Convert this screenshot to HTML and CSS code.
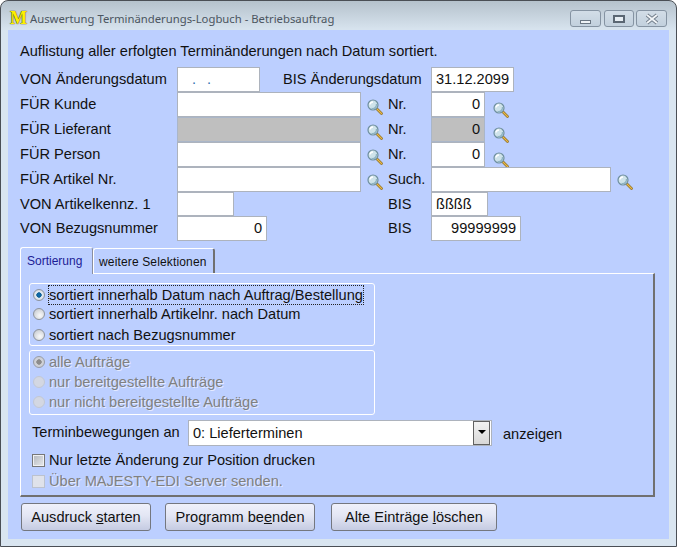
FILE: index.html
```html
<!DOCTYPE html>
<html lang="de">
<head>
    <meta charset="utf-8" />
    <title>Auswertung Terminänderungs-Logbuch - Betriebsauftrag</title>
    <link rel="stylesheet" href="styles.css">
</head>
<body>
    <svg class="defs" width="0" height="0">
        <symbol id="lens" viewBox="0 0 16 16">
            <path d="M9.5 9.5L14.5 14.5" stroke="#8a6a20" stroke-width="2.6" stroke-linecap="round"/>
            <path d="M10 10L14.5 14.5" stroke="#e8b848" stroke-width="1.3" stroke-linecap="round"/>
            <circle cx="6" cy="6" r="5" fill="#cfe3ea" stroke="#6f8f9e" stroke-width="1.2"/>
            <path d="M3 5.5A3 3 0 0 1 6 3" fill="none" stroke="#fff" stroke-width="1.5"/>
            <path d="M4.5 9.5A4 4 0 0 0 9.5 5" fill="none" stroke="#8fb4c4" stroke-width="1.4"/>
        </symbol>
    </svg>

    <div class="window">
        <div class="titlebar">
            <span class="logo">M</span>
            <span class="title">Auswertung Terminänderungs-Logbuch - Betriebsauftrag</span>
            <div class="controls">
                <div class="ctrl"><span class="ico-min"></span></div>
                <div class="ctrl ctrl-mid"><span class="ico-max"></span></div>
                <div class="ctrl">
                    <svg width="16" height="12" viewBox="0 0 16 12"><path d="M3 2L13 10M13 2L3 10" stroke="#6f7b88" stroke-width="3.6"/><path d="M3 2L13 10M13 2L3 10" stroke="#f2f5f8" stroke-width="1.8"/></svg>
                </div>
            </div>
        </div>

        <div class="client">
            <div class="intro">Auflistung aller erfolgten Terminänderungen nach Datum sortiert.</div>

            <div class="row">
                <div class="label">VON Änderungsdatum</div>
                <div class="field w-date blank-date">. .</div>
                <div class="label label-bis">BIS Änderungsdatum</div>
                <div class="field w-date">31.12.2099</div>
            </div>
            <div class="row">
                <div class="label">FÜR Kunde</div>
                <div class="slot"><div class="field w-main"></div><svg class="lens"><use href="#lens"/></svg></div>
                <div class="label2">Nr.</div>
                <div class="field w-nr num">0</div>
                <svg class="lens lens-low"><use href="#lens"/></svg>
            </div>
            <div class="row">
                <div class="label">FÜR Lieferant</div>
                <div class="slot"><div class="field w-main off"></div><svg class="lens"><use href="#lens"/></svg></div>
                <div class="label2">Nr.</div>
                <div class="field w-nr num off">0</div>
                <svg class="lens lens-low"><use href="#lens"/></svg>
            </div>
            <div class="row">
                <div class="label">FÜR Person</div>
                <div class="slot"><div class="field w-main"></div><svg class="lens"><use href="#lens"/></svg></div>
                <div class="label2">Nr.</div>
                <div class="field w-nr num">0</div>
                <svg class="lens lens-low"><use href="#lens"/></svg>
            </div>
            <div class="row">
                <div class="label">FÜR Artikel Nr.</div>
                <div class="slot"><div class="field w-main"></div><svg class="lens"><use href="#lens"/></svg></div>
                <div class="label2">Such.</div>
                <div class="field w-such"></div>
                <svg class="lens"><use href="#lens"/></svg>
            </div>
            <div class="row row-short">
                <div class="label">VON Artikelkennz. 1</div>
                <div class="slot"><div class="field w-kz"></div></div>
                <div class="label2">BIS</div>
                <div class="field w-kz">ßßßß</div>
            </div>
            <div class="row">
                <div class="label">VON Bezugsnummer</div>
                <div class="slot"><div class="field w-bez num">0</div></div>
                <div class="label2">BIS</div>
                <div class="field w-bez num">99999999</div>
            </div>

            <div class="tabs">
                <div class="tab tab-active">Sortierung</div>
                <div class="tab">weitere Selektionen</div>
            </div>
            <div class="panel">
                <div class="group group-a">
                    <div class="opt"><span class="radio on"></span><span class="focus">sortiert innerhalb Datum nach Auftrag/Bestellung</span></div>
                    <div class="opt opt-mid"><span class="radio"></span><span>sortiert innerhalb Artikelnr. nach Datum</span></div>
                    <div class="opt opt-low"><span class="radio"></span><span>sortiert nach Bezugsnummer</span></div>
                </div>
                <div class="group group-b">
                    <div class="opt dim"><span class="radio on"></span><span>alle Aufträge</span></div>
                    <div class="opt dim"><span class="radio"></span><span>nur bereitgestellte Aufträge</span></div>
                    <div class="opt dim"><span class="radio"></span><span>nur nicht bereitgestellte Aufträge</span></div>
                </div>
                <div class="select-row">
                    <div class="select-label">Terminbewegungen an</div>
                    <div class="select">
                        <span>0: Lieferterminen</span>
                        <div class="select-btn"><span class="arrow"></span></div>
                    </div>
                    <div class="select-after">anzeigen</div>
                </div>
                <div class="check-row"><span class="check"></span><span>Nur letzte Änderung zur Position drucken</span></div>
                <div class="check-row dim"><span class="check"></span><span>Über MAJESTY-EDI Server senden.</span></div>
            </div>

            <div class="buttons">
                <div class="btn btn-print">Ausdruck <u>s</u>tarten</div>
                <div class="btn btn-quit">Programm be<u>e</u>nden</div>
                <div class="btn btn-del">Alte Einträge <u>l</u>öschen</div>
            </div>
        </div>
    </div>
</body>
</html>
```

FILE: styles.css
```css
/* Win7 style dialog, fixed window size */
* {
    box-sizing: border-box;
}

body {
    margin: 0;
    background: #fff;
    font-family: "Liberation Sans", Arial, sans-serif;
    font-size: 14.6px;
    color: #111;
}

.defs {
    display: block;
    height: 0;
}

.window {
    width: 677px;
    height: 547px;
    border: 1px solid #4a4f55;
    border-radius: 8px 8px 0 0;
    background: linear-gradient(#b5c2cc 0, #d9e5f0 30px, #d9e5f0 100%);
    display: flex;
    flex-direction: column;
}

.titlebar {
    height: 29px;
    flex: none;
    display: flex;
    align-items: center;
    padding-left: 9px;
}

.logo {
    width: 19px;
    margin-top: 4px;
    font-family: "Liberation Serif", serif;
    font-weight: bold;
    font-size: 18px;
    line-height: 18px;
    color: #fff000;
    text-shadow: 0 0 1px #4a4000, 0 0 1px #4a4000;
}

.title {
    margin-left: 1px;
    margin-top: 6px;
    font-family: "Noto Sans", sans-serif;
    font-size: 11.3px;
    color: #4b5560;
}

.controls {
    margin-left: auto;
    margin-right: 9px;
    margin-top: 6px;
    display: flex;
    gap: 3px;
}

.ctrl {
    width: 31px;
    height: 17px;
    border: 1px solid #8593a2;
    border-radius: 3px;
    background: linear-gradient(#d2dde7, #c2d0dd);
    display: flex;
    align-items: center;
    justify-content: center;
}

.ctrl-mid {
    width: 30px;
    margin-right: -1px;
}

.ico-min {
    width: 11px;
    height: 4px;
    margin-top: 6px;
    background: #eef2f6;
    border: 1px solid #6a7683;
}

.ico-max {
    width: 12px;
    height: 8px;
    border: 2px solid #5a6673;
    background: #e6edf3;
}

.client {
    flex: 1;
    margin: 0 7px 7px 7px;
    padding: 12px 0 0 12px;
    background: #bccfff;
}

.intro {
    height: 18px;
    line-height: 18px;
    margin-bottom: 7px;
}

.row {
    height: 25px;
    display: flex;
}

.row-short {
    height: 24px;
}

.label {
    width: 157px;
    line-height: 24px;
    white-space: nowrap;
}

.label-bis {
    width: 148px;
    margin-left: 23px;
}

.slot {
    width: 184px;
    display: flex;
}

.label2 {
    width: 43px;
    margin-left: 27px;
    line-height: 24px;
}

.field {
    flex: none;
    height: 100%;
    border: 1px solid #adb3bd;
    background: #fff;
    line-height: 23px;
    padding: 0 4px;
    white-space: nowrap;
}

.off {
    background: #bfbfbf;
    border-color: #aab6c8;
}

.num {
    text-align: right;
}

.w-date {
    width: 83px;
}

.blank-date {
    padding-left: 14px;
    word-spacing: 7px;
    color: #2f6fb0;
}

.w-main {
    width: 184px;
}

.w-nr {
    width: 54px;
}

.w-such {
    width: 180px;
}

.w-kz {
    width: 57px;
}

.w-bez {
    width: 90px;
}

.lens {
    flex: none;
    width: 16px;
    height: 16px;
    margin: 7px 0 0 6px;
}

.slot .lens {
    margin-right: -22px;
}

.lens-low {
    margin: 10px 0 0 8px;
}

.tabs {
    height: 27px;
    margin-top: 5px;
    display: flex;
    align-items: flex-end;
    font-size: 12px;
}

.tab {
    width: 122px;
    height: 25px;
    padding: 6px 0 0 5px;
    border-top: 1px solid #fff;
    border-left: 1px solid #fff;
    border-right: 2px solid #707070;
    border-radius: 3px 3px 0 0;
    letter-spacing: 0.15px;
}

.tab-active {
    width: 73px;
    height: 27px;
    padding: 6px 0 0 6px;
    border-right: 1px solid #8a8fa0;
    color: #1c1c96;
    letter-spacing: 0;
    margin-bottom: -1px;
    position: relative;
    z-index: 1;
    background: #bccfff;
}

.panel {
    width: 635px;
    height: 224px;
    padding: 9px 0 0 8px;
    border-top: 1px solid #fff;
    border-left: 1px solid #fff;
    border-right: 2px solid #707070;
    border-bottom: 2px solid #707070;
}

.group {
    width: 346px;
    padding: 1px 3px;
    border: 1px solid #fff;
    border-radius: 3px;
}

.group-a {
    height: 63px;
}

.group-b {
    height: 65px;
    margin-top: 4px;
}

.opt {
    height: 20px;
    display: flex;
    align-items: center;
}

.opt-mid {
    margin-top: -1px;
}

.opt-low {
    margin-top: 1px;
}

.radio {
    flex: none;
    width: 12px;
    height: 12px;
    margin-right: 4px;
    border: 1px solid #8d939c;
    border-radius: 50%;
    background: radial-gradient(circle at 60% 65%, #f4f5f6 10%, #c4c8ce 90%);
}

.radio.on {
    background: radial-gradient(circle, #0e6fae 0, #0e5f98 34%, #e6edf3 42%, #c8ccd2 100%);
}

.focus {
    outline: 1px dotted #222;
    line-height: 18px;
}

.dim {
    color: #808080;
    text-shadow: 1px 1px 0 #e4eaff;
}

.dim .radio {
    border-color: #c2c8d4;
    background: #d3d7e2;
}

.dim .radio.on {
    border-color: #979ca6;
    background: radial-gradient(circle, #8c8c8c 0, #8c8c8c 34%, #d0d2d8 42%, #c8cad0 100%);
}

.select-row {
    height: 26px;
    margin: 5px 0 0 3px;
    display: flex;
}

.select-label {
    width: 156px;
    line-height: 24px;
}

.select {
    width: 304px;
    height: 26px;
    border: 1px solid #adb3bd;
    background: #fff;
    padding-left: 4px;
    line-height: 25px;
    display: flex;
    justify-content: space-between;
}

.select-btn {
    width: 17px;
    height: 24px;
    margin-right: 1px;
    border: 1px solid #606060;
    background: linear-gradient(#f2f2f2, #d8d8d8);
    display: flex;
    justify-content: center;
    padding-top: 8px;
}

.arrow {
    width: 0;
    height: 0;
    border-left: 4px solid transparent;
    border-right: 4px solid transparent;
    border-top: 4px solid #000;
}

.select-after {
    margin-left: 11px;
    line-height: 28px;
}

.check-row {
    height: 20px;
    margin: 4px 0 0 3px;
    display: flex;
    align-items: center;
}

.check-row.dim {
    margin-top: 1px;
}

.check {
    flex: none;
    width: 13px;
    height: 13px;
    margin-right: 4px;
    border: 1px solid #777;
    background: linear-gradient(135deg, #b2b6bc, #e8eaed);
    box-shadow: inset 0 0 0 1px #f0f1f3;
}

.dim .check {
    border-color: #bcc2ce;
    background: #dfe2ea;
    box-shadow: none;
}

.buttons {
    margin: 6px 0 0 1px;
    display: flex;
}

.btn {
    height: 28px;
    border: 1px solid #74777f;
    border-radius: 3px;
    background: linear-gradient(#eff1fb, #e3e6f4 45%, #c5cbe2);
    text-align: center;
    line-height: 26px;
}

.btn-print {
    width: 130px;
}

.btn-quit {
    width: 150px;
    margin-left: 14px;
}

.btn-del {
    width: 166px;
    margin-left: 16px;
}
```
